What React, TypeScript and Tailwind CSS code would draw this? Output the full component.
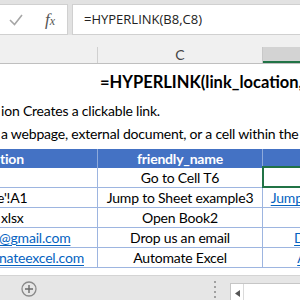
export default function App() {
  const sheet = { fontFamily: 'Lato, "Liberation Sans", sans-serif' };
  const link = "text-[#0563c1] underline underline-offset-2 decoration-1";
  const rowCls = "flex h-[20px] border-b border-[#9db5e0]";
  const cellB = "w-[98px] shrink-0 border-r border-[#9db5e0] flex items-end overflow-hidden whitespace-nowrap leading-[18px]";
  const cellC = "w-[165px] shrink-0 border-r border-[#9db5e0] flex items-end justify-center whitespace-nowrap leading-[18px]";
  const cellD = "w-[162px] shrink-0 flex items-end justify-center whitespace-nowrap leading-[18px]";
  return (
    <div className="w-[300px] h-[300px] overflow-hidden bg-white flex flex-col text-[14px] tracking-[-0.2px] text-[#000]" style={sheet}>
      {/* formula bar */}
      <div className="h-[35px] shrink-0 bg-[#e2e2e2] pt-[4px] flex tracking-normal">
        <div className="w-[68px] bg-white border-y border-r border-[#d0d0d0] flex items-center relative">
          <svg width="14" height="12" viewBox="0 0 14 12" className="ml-[9px] mt-[1px]">
            <path d="M1 6 L5.5 10.5 L13 1" fill="none" stroke="#a6a6a6" strokeWidth="1.6" />
          </svg>
          <span
            className="ml-[22px] italic text-[#555] text-[17px] leading-none"
            style={{ fontFamily: '"Liberation Serif", serif' }}
          >
            f<span className="text-[12px]">x</span>
          </span>
        </div>
        <div className="w-[4px]" />
        <div
          className="flex-1 bg-white border-y border-l border-[#d0d0d0] flex items-center pl-[11px] text-[13px] text-[#222] whitespace-nowrap"
          style={{ fontFamily: '"Open Sans", sans-serif' }}
        >
          =HYPERLINK(B8,C8)
        </div>
      </div>
      {/* band */}
      <div className="h-[12px] shrink-0 bg-[#f0f0f0]" />
      {/* column headers */}
      <div className="h-[17px] shrink-0 flex bg-[#f0f0f0] border-b border-[#bfbfbf] text-[14px] text-[#444] tracking-normal">
        <div className="w-[98px] border-r border-[#d0d0d0]" />
        <div className="w-[165px] border-r border-[#c8c8c8] flex items-center justify-center leading-none">C</div>
        <div className="flex-1 bg-[#d3d3d3] border-b-2 border-[#217346]" />
      </div>
      {/* sheet body */}
      <div className="flex-1 flex flex-col">
        <div className="mt-[8px] pl-[100px] text-[16.5px] font-bold leading-[21px] whitespace-nowrap tracking-normal">
          =HYPERLINK(link_location,[friendly_name])
        </div>
        <div className="mt-[6px] leading-[23px] whitespace-nowrap pl-[1px]">
          <div>ion Creates a clickable link.</div>
          <div>a webpage, external document, or a cell within the workbook.</div>
        </div>
        {/* table */}
        <div className="mt-[4px] w-[425px] flex flex-col">
          <div className="flex h-[19px] bg-[#4472c4] text-white font-bold">
            <div className="w-[98px] shrink-0 border-r border-[#8eaadb] flex items-end leading-[18px] whitespace-nowrap overflow-hidden">tion</div>
            <div className="w-[165px] shrink-0 border-r border-[#8eaadb] flex items-end justify-center leading-[18px]">friendly_name</div>
            <div className="w-[162px] shrink-0" />
          </div>
          <div className={rowCls}>
            <div className={cellB} />
            <div className={cellC}>Go to Cell T6</div>
            <div className={cellD + " relative"}>
              <div className="absolute left-[-1px] top-[-2px] w-[60px] h-[22px] border-2 border-[#217346]" />
            </div>
          </div>
          <div className={rowCls}>
            <div className={cellB}><span className="ml-[-3px]">e'!A1</span></div>
            <div className={cellC}>Jump to Sheet example3</div>
            <div className={cellD}><span className={link}>Jump to Sheet example3</span></div>
          </div>
          <div className={rowCls}>
            <div className={cellB}><span className="ml-[1px]">xlsx</span></div>
            <div className={cellC}>Open Book2</div>
            <div className={cellD} />
          </div>
          <div className={rowCls}>
            <div className={cellB}><span className={link + " ml-[-1px]"}>@gmail.com</span></div>
            <div className={cellC}>Drop us an email</div>
            <div className={cellD}><span className={link}>Drop us an email</span></div>
          </div>
          <div className={rowCls}>
            <div className={cellB}><span className={link + " ml-[-1px]"}>nateexcel.com</span></div>
            <div className={cellC}>Automate Excel</div>
            <div className={cellD}><span className={link}>Automate Excel</span></div>
          </div>
        </div>
      </div>
      {/* bottom bar */}
      <div className="h-[25px] shrink-0 bg-[#e6e6e6] border-t border-[#d4d4d4] flex items-start relative">
        <svg width="16" height="16" viewBox="0 0 16 16" className="ml-[21px] mt-[5px]">
          <circle cx="8" cy="8" r="7" fill="none" stroke="#8a8a8a" strokeWidth="1.3" />
          <path d="M8 4 V12 M4 8 H12" stroke="#6a6a6a" strokeWidth="1.4" />
        </svg>
        <div className="ml-[177px] mt-[5px] flex flex-col gap-[3px]">
          <div className="w-[2px] h-[2px] bg-[#a0a0a0]" />
          <div className="w-[2px] h-[2px] bg-[#a0a0a0]" />
          <div className="w-[2px] h-[2px] bg-[#a0a0a0]" />
          <div className="w-[2px] h-[2px] bg-[#a0a0a0]" />
        </div>
        <div className="ml-[14px] mt-[7px] flex-1 h-[20px] bg-white border-l border-t border-[#c6c6c6] flex">
          <div className="w-[13px] border-r border-[#dadada] flex items-center justify-center">
            <svg width="5" height="7" viewBox="0 0 5 7"><path d="M5 0 L0 3.5 L5 7 Z" fill="#555" /></svg>
          </div>
        </div>
      </div>
    </div>
  );
}
